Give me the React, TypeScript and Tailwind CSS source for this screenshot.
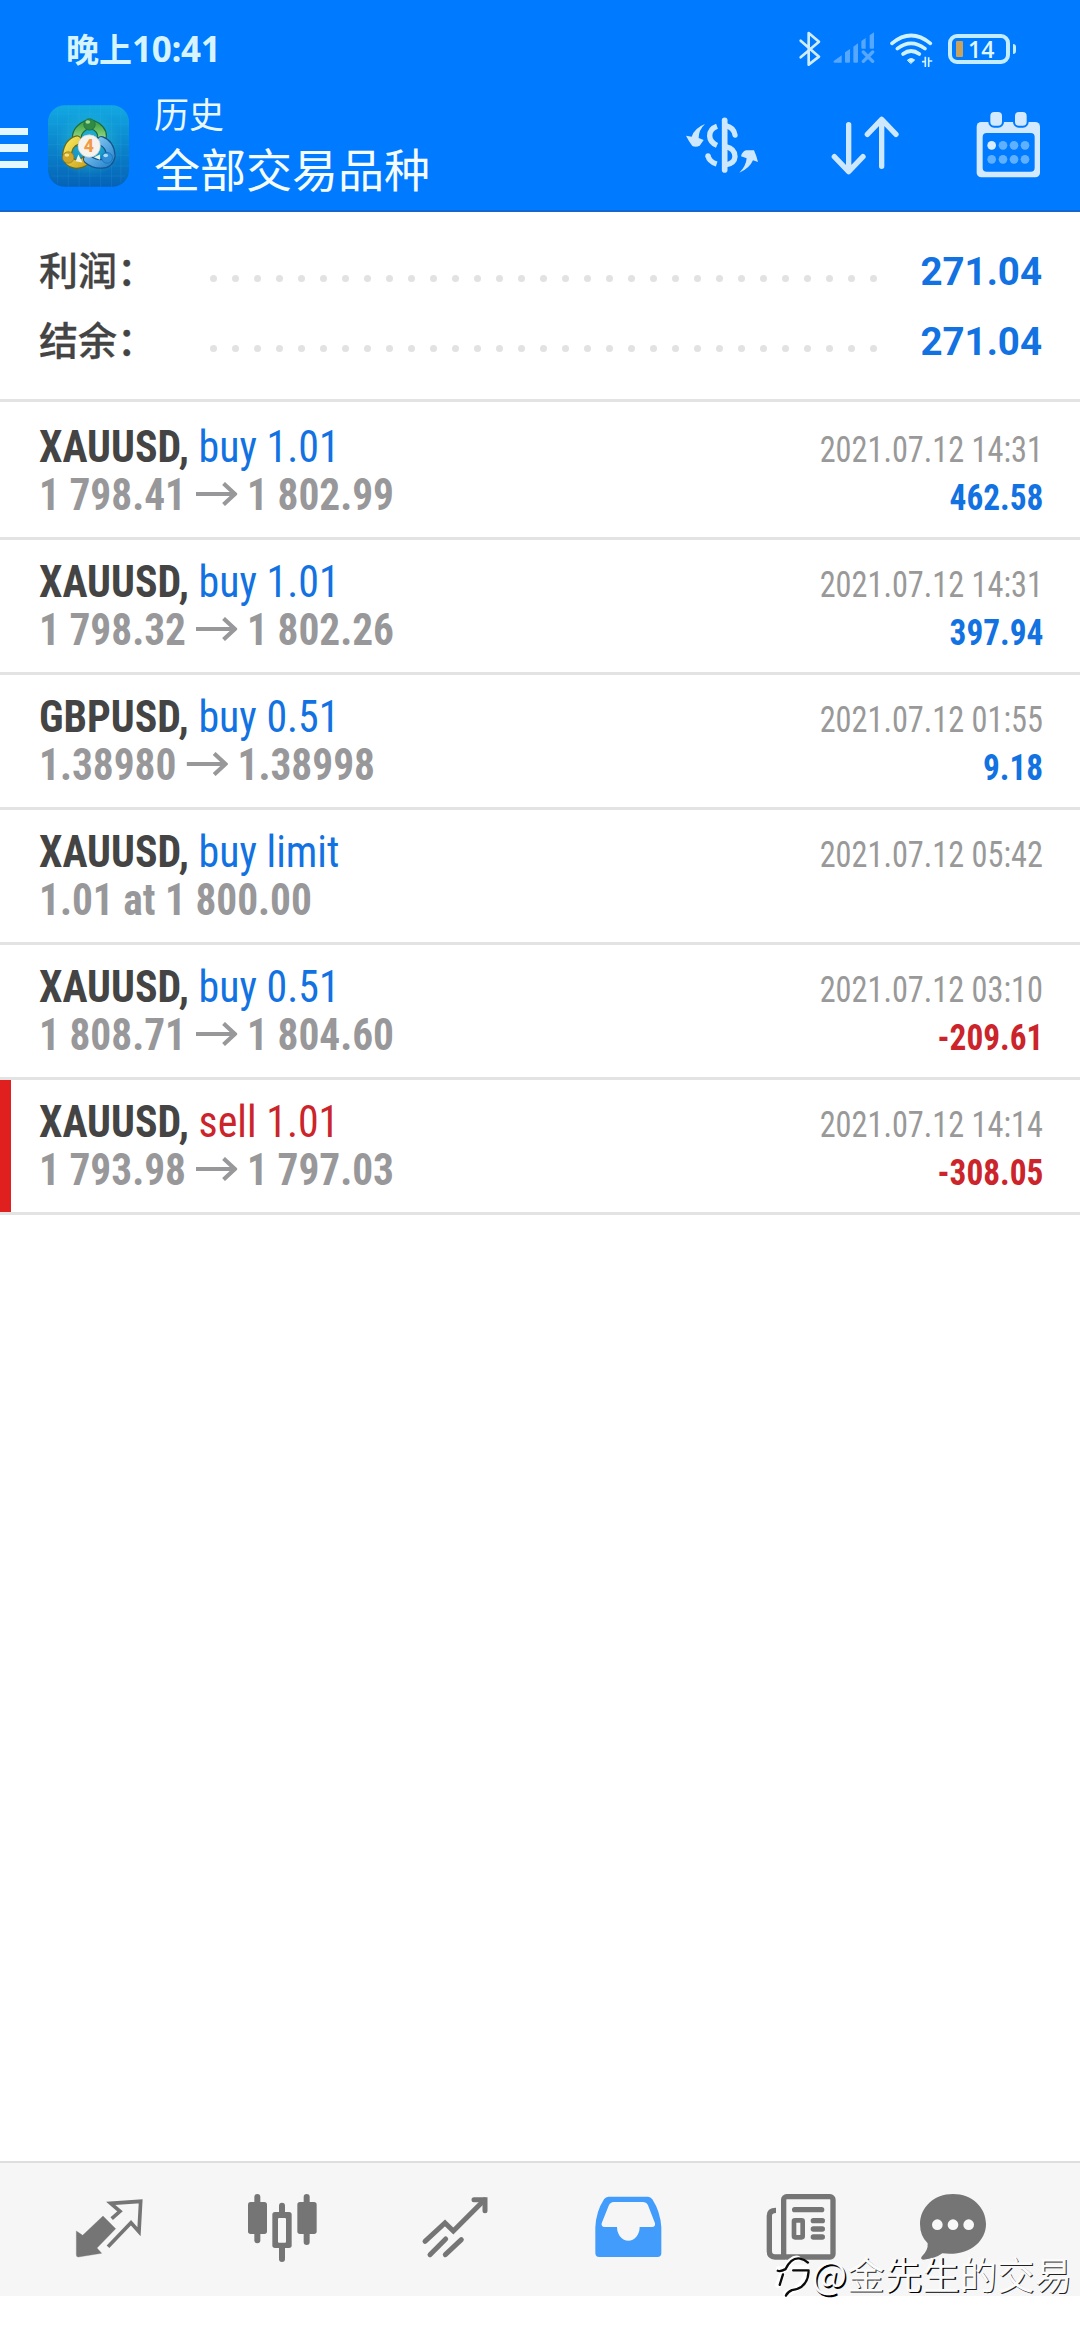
import type { ReactNode } from "react";

type Trade = {
  symbol: string;
  action: string;
  side: "buy" | "sell";
  from: string;
  to?: string;
  time: string;
  profit?: string;
  marked?: boolean;
};

const trades: Trade[] = [
  { symbol: "XAUUSD", action: "buy 1.01", side: "buy", from: "1 798.41", to: "1 802.99", time: "2021.07.12 14:31", profit: "462.58" },
  { symbol: "XAUUSD", action: "buy 1.01", side: "buy", from: "1 798.32", to: "1 802.26", time: "2021.07.12 14:31", profit: "397.94" },
  { symbol: "GBPUSD", action: "buy 0.51", side: "buy", from: "1.38980", to: "1.38998", time: "2021.07.12 01:55", profit: "9.18" },
  { symbol: "XAUUSD", action: "buy limit", side: "buy", from: "1.01 at 1 800.00", time: "2021.07.12 05:42" },
  { symbol: "XAUUSD", action: "buy 0.51", side: "buy", from: "1 808.71", to: "1 804.60", time: "2021.07.12 03:10", profit: "-209.61" },
  { symbol: "XAUUSD", action: "sell 1.01", side: "sell", from: "1 793.98", to: "1 797.03", time: "2021.07.12 14:14", profit: "-308.05", marked: true },
];

function BluetoothIcon() {
  return (
    <svg viewBox="414 94 72 108" className="h-9 w-6" fill="none" stroke="#d0ecff" strokeWidth="8" strokeLinecap="round" strokeLinejoin="round">
      <path d="M422 123L477 171L446 195V100L477 126L422 173" />
    </svg>
  );
}

function SignalIcon() {
  return (
    <svg viewBox="519 94 126 108" className="ml-[11px] h-9 w-[42px]" fill="#55a7ff">
      <path d="M521 184L545 167V189H524Q519 189 521 184Z" />
      <path d="M555 158L570 148V186Q570 189 567 189H558Q555 189 555 186Z" />
      <path d="M580 141L594 131V186Q594 189 591 189H583Q580 189 580 186Z" />
      <path d="M604 124L617 115V147H607Q604 147 604 144Z" />
      <path d="M629 107L642 98V144Q642 147 639 147H632Q629 147 629 144Z" />
      <path d="M610 157L638 185M638 157L610 185" stroke="#55a7ff" strokeWidth="10" strokeLinecap="round" />
    </svg>
  );
}

function WifiIcon() {
  return (
    <svg viewBox="687 94 138 108" className="ml-[14px] h-9 w-[46px]" fill="none" stroke="#d0f2ff" strokeWidth="11" strokeLinecap="round">
      <path d="M696 131Q753 84 811 131" />
      <path d="M712 147Q753 115 795 147" />
      <path d="M729 163Q753 145 778 163" />
      <path d="M743 181Q753 172 764 181L753 191Z" fill="#d0f2ff" strokeWidth="3" strokeLinejoin="round" />
      <path d="M788 186L796 186V171V200M806 200V173V184H815" strokeWidth="5" />
    </svg>
  );
}

function Battery() {
  return (
    <div className="ml-[13px] flex items-center gap-[3px]">
      <div className="flex h-[30px] w-[62px] items-center rounded-[9px] border-4 border-[#c3ecff] pl-[4px]">
        <div className="h-4 w-[7px] rounded-[1px] bg-[#c9a35c]" />
        <span className="ml-[5px] font-['Open_Sans'] text-[23px] leading-6 font-semibold text-[#e0f8ff]">14</span>
      </div>
      <div className="h-[10px] w-[3px] rounded-r bg-[#c3ecff]" />
    </div>
  );
}

function AppLogo() {
  return (
    <svg viewBox="24 30 240 242" className="mt-[2px] ml-5 h-[82px] w-[81px]">
      <defs>
        <linearGradient id="tile" x1="0" y1="0" x2="0" y2="1">
          <stop offset="0" stopColor="#12a9e2" />
          <stop offset="0.5" stopColor="#0b85cc" />
          <stop offset="1" stopColor="#0562b6" />
        </linearGradient>
        <radialGradient id="glow">
          <stop offset="0" stopColor="#2fd0c8" stopOpacity="0.65" />
          <stop offset="1" stopColor="#2fd0c8" stopOpacity="0" />
        </radialGradient>
        <linearGradient id="green" x1="0" y1="0" x2="0" y2="1">
          <stop offset="0" stopColor="#4aa84a" />
          <stop offset="1" stopColor="#a5e592" />
        </linearGradient>
        <linearGradient id="gold" x1="0" y1="0" x2="1" y2="1">
          <stop offset="0" stopColor="#f3e65a" />
          <stop offset="1" stopColor="#cfa722" />
        </linearGradient>
        <linearGradient id="azure" x1="0" y1="0" x2="1" y2="1">
          <stop offset="0" stopColor="#8fd0f5" />
          <stop offset="1" stopColor="#2a86cf" />
        </linearGradient>
      </defs>
      <rect x="24" y="30" width="240" height="242" rx="50" fill="url(#tile)" />
      <path d="M52 40V262M84 30V272M116 30V272M148 30V272M180 30V272M212 30V272M240 40V262M34 56H254M24 86H264M24 116H264M24 146H264M24 178H264M24 210H264M34 240H254" stroke="#55c6ff" strokeOpacity="0.18" strokeWidth="2" />
      <circle cx="146" cy="145" r="100" fill="url(#glow)" />
      <path d="M112 138Q103 112 128 94Q147 80 168 94Q190 110 182 134" fill="none" stroke="#1d6a3d" strokeWidth="29" strokeLinecap="round" />
      <path d="M112 138Q103 112 128 94Q147 80 168 94Q190 110 182 134" fill="none" stroke="url(#green)" strokeWidth="22" strokeLinecap="round" />
      <path d="M110 134Q84 142 80 178Q82 200 104 204Q122 206 136 194" fill="none" stroke="#6a6a1c" strokeWidth="29" strokeLinecap="round" />
      <path d="M110 134Q84 142 80 178Q82 200 104 204Q122 206 136 194" fill="none" stroke="url(#gold)" strokeWidth="22" strokeLinecap="round" />
      <path d="M182 136Q208 146 210 180Q206 203 182 204Q160 205 142 190" fill="none" stroke="#15548d" strokeWidth="29" strokeLinecap="round" />
      <path d="M182 136Q208 146 210 180Q206 203 182 204Q160 205 142 190" fill="none" stroke="url(#azure)" strokeWidth="22" strokeLinecap="round" />
      <path d="M106 196L114 176L126 200ZM178 192L160 184L178 176Z" fill="#eef3e0" />
      <ellipse cx="147" cy="87" rx="17" ry="17" fill="#2f8a45" stroke="#1b6a3c" strokeWidth="2" />
      <ellipse cx="142" cy="80" rx="7" ry="5" fill="#a3d98e" />
      <circle cx="84" cy="185" r="17" fill="#cfa52a" stroke="#8c7a1c" strokeWidth="2" />
      <ellipse cx="80" cy="178" rx="7" ry="5" fill="#f3e284" />
      <circle cx="199" cy="186" r="16" fill="#2f8fd6" stroke="#1a69ad" strokeWidth="2" />
      <ellipse cx="195" cy="179" rx="7" ry="5" fill="#a8daf7" />
      <circle cx="146" cy="151" r="33" fill="#f6f3ef" stroke="#c8cfd0" strokeWidth="2" />
      <text x="145" y="170" textAnchor="middle" fontFamily="Roboto, sans-serif" fontSize="52" fontWeight="800" fill="#f09a45">4</text>
    </svg>
  );
}

function CurrencyIcon() {
  return (
    <svg viewBox="75 342 222 180" className="h-[60px] w-[74px]" fill="none" stroke="#cde7fd" strokeWidth="16">
      <path d="M194 358V507" strokeLinecap="round" strokeWidth="17" />
      <path d="M197 374Q222 380 225 402" strokeLinecap="round" />
      <path d="M197 437Q225 443 225 467Q224 487 197 492" />
      <path d="M171 376Q149 384 149 405Q150 424 171 433" />
      <path d="M144 464Q147 482 170 489" strokeLinecap="butt" />
      <circle cx="144" cy="465" r="8" fill="#cde7fd" stroke="none" />
      <path d="M135 369Q116 387 116 411L131 417L119 434Q108 440 97 435Q86 420 78 404L95 407Q104 381 135 369Z" fill="#cde7fd" stroke="none" />
      <path d="M238 515Q258 496 260 472L243 466Q246 452 258 448L282 448Q290 466 294 483L279 478Q268 503 238 515Z" fill="#cde7fd" stroke="none" />
    </svg>
  );
}

function SortIcon() {
  return (
    <svg viewBox="510 345 210 180" className="ml-[71px] h-[60px] w-[70px]" fill="none" stroke="#cde7fd" strokeWidth="16" strokeLinecap="round" strokeLinejoin="round">
      <path d="M566 374V514M523 470L566 515L609 470" />
      <path d="M665 499V360M622 403L665 358L708 403" />
    </svg>
  );
}

function CalendarIcon() {
  return (
    <svg viewBox="945 333 198 204" className="ml-[75px] h-[68px] w-[66px]">
      <rect x="950" y="366" width="190" height="166" rx="14" fill="#d3eafe" />
      <rect x="968" y="399" width="156" height="116" rx="12" fill="#007aff" />
      <rect x="985" y="330" width="47" height="53" rx="17" fill="#007aff" />
      <rect x="1059" y="330" width="47" height="53" rx="17" fill="#007aff" />
      <rect x="991" y="336" width="35" height="41" rx="12" fill="#d3eafe" />
      <rect x="1065" y="336" width="35" height="41" rx="12" fill="#d3eafe" />
      <g fill="#5fb0ff">
        <circle cx="995" cy="436" r="13" fill="#d8eefe" />
        <circle cx="1029" cy="436" r="13" />
        <circle cx="1062" cy="436" r="13" />
        <circle cx="1095" cy="436" r="13" />
        <circle cx="995" cy="478" r="13" />
        <circle cx="1029" cy="478" r="13" />
        <circle cx="1062" cy="478" r="13" />
        <circle cx="1095" cy="478" r="13" />
      </g>
    </svg>
  );
}

function Header() {
  return (
    <header className="h-[212px] border-b-2 border-[#1467cf] bg-[#007aff]">
      <div className="flex h-[98px] items-center justify-between pr-[64px] pb-px pl-[66px]">
        <span className="font-['Noto_Sans_CJK_SC',sans-serif] text-[33px] leading-10 font-bold text-[#d5f4ff]">
          晚上<span className="font-['Open_Sans',sans-serif] text-[35px] font-bold tracking-[-0.3px]">10:41</span>
        </span>
        <div className="flex items-center">
          <BluetoothIcon />
          <SignalIcon />
          <WifiIcon />
          <Battery />
        </div>
      </div>
      <div className="flex h-[112px] items-center justify-between pr-[39px] pb-[18px]">
        <div className="flex items-center">
          <div className="mt-[6px] flex w-7 flex-col gap-[9px]">
            <div className="h-[7.5px] bg-[#e4f6fe]" />
            <div className="h-[7.5px] bg-[#e4f6fe]" />
            <div className="h-[7.5px] bg-[#e4f6fe]" />
          </div>
          <AppLogo />
          <div className="ml-[25px] flex flex-col gap-1 font-['Noto_Sans_CJK_SC',sans-serif] text-[#e9f7ff]">
            <span className="text-[35px] leading-10">历史</span>
            <span className="text-[46px] leading-[60px] text-[#f4fcff]">全部交易品种</span>
          </div>
        </div>
        <div className="flex items-center">
          <CurrencyIcon />
          <SortIcon />
          <CalendarIcon />
        </div>
      </div>
    </header>
  );
}

function SummaryRow({ label, value }: { label: string; value: string }) {
  return (
    <div className="flex h-[70px] items-center">
      <span className="w-[171px] pb-[7px] font-['Noto_Sans_CJK_SC',sans-serif] text-[39px] leading-[60px] font-medium text-[#444] [-webkit-text-stroke:0.3px_#444]">{label}</span>
      <div className="mt-[15px] flex w-[667px] justify-between">
        {Array.from({ length: 31 }, (_, i) => (
          <span key={i} className="size-[7px] rounded-full bg-[#e2e2e2]" />
        ))}
      </div>
      <span className="flex-1 text-right text-[38.5px] leading-[71px] font-bold text-[#1272e2]">{value}</span>
    </div>
  );
}

function PriceArrow() {
  return (
    <svg viewBox="0 0 42 24" preserveAspectRatio="none" className="mr-[10px] ml-[11px] inline-block h-6 w-[44px] align-[4px]" fill="none" stroke="#98989a" strokeWidth="4.2">
      <path d="M0 12H40M28 1.5L39.5 12L28 22.5" />
    </svg>
  );
}

function TradeRow({ trade }: { trade: Trade }) {
  const loss = trade.profit?.startsWith("-");
  return (
    <div className={`flex h-[135px] flex-col border-b-[3px] border-[#e3e3e3] pt-[18px] pr-[37px] pl-[39px] [font-stretch:75%] ${trade.marked ? "bg-[linear-gradient(to_right,#e01f1f_11px,transparent_11px)]" : ""}`}>
      <div className="flex h-12 items-baseline justify-between">
        <span className="origin-left scale-x-[.952] text-[44px] leading-[48px] whitespace-pre">
          <span className="font-bold text-[#444]">{trade.symbol}, </span>
          <span className={trade.side === "buy" ? "text-[#1272e2]" : "text-[#cb242b]"}>{trade.action}</span>
        </span>
        <span className="origin-right scale-x-[.897] text-[36px] leading-[48px] text-[#999]">{trade.time}</span>
      </div>
      <div className="flex h-12 items-baseline justify-between">
        <span className="origin-left scale-x-[.94] text-[44px] leading-[48px] font-bold whitespace-nowrap text-[#98989a]">
          {trade.from}
          {trade.to && <PriceArrow />}
          {trade.to}
        </span>
        {trade.profit && (
          <span className={`origin-right scale-x-[.925] text-[36px] leading-[48px] font-bold ${loss ? "text-[#cb242b]" : "text-[#1272e2]"}`}>{trade.profit}</span>
        )}
      </div>
    </div>
  );
}

function NavItem({ children }: { children: ReactNode }) {
  return <div className="flex w-[173px] justify-center pt-[29px] last:w-[132px]">{children}</div>;
}

function NavBar() {
  return (
    <nav className="flex h-[135px] border-t-2 border-[#dedede] bg-[#f6f6f6] pl-[22px]">
      <NavItem>
        <svg viewBox="97 126 216 216" className="size-[72px]" fill="#757575">
          <path d="M187 198L225 236L169 294L183 310L113 321Q107 321 107 315V243L126 256Z" stroke="#757575" strokeWidth="1" />
          <path d="M213 206L238 184L210 160L300 154L295 245L271 218L202 290" fill="none" stroke="#757575" strokeWidth="11" />
        </svg>
      </NavItem>
      <NavItem>
        <svg viewBox="615 126 216 216" className="size-[72px]" fill="#757575">
          <rect x="640" y="132" width="18" height="148" rx="9" />
          <rect x="621" y="156" width="57" height="96" rx="8" />
          <rect x="788" y="132" width="18" height="153" rx="9" />
          <rect x="769" y="156" width="58" height="96" rx="8" />
          <rect x="714" y="158" width="18" height="178" rx="9" />
          <rect x="694" y="186" width="58" height="108" rx="8" />
          <rect x="711" y="204" width="24" height="74" rx="3" fill="#f6f6f6" />
        </svg>
      </NavItem>
      <NavItem>
        <svg viewBox="1134 126 216 216" className="size-[72px]" fill="none" stroke="#757575" strokeWidth="15" strokeLinecap="round">
          <path d="M1152 274L1212 219L1237 243L1330 150" />
          <path d="M1299 149H1332V182" />
          <path d="M1167 314L1214 267M1213 314L1261 269" />
        </svg>
      </NavItem>
      <NavItem>
        <svg viewBox="94 126 216 216" className="size-[72px]">
          <path fillRule="evenodd" fill="#429cfb" d="M104 232Q106 185 130 148Q135 140 144 140H262Q270 140 275 148Q299 185 302 232V309Q302 321 290 321H116Q104 321 104 309ZM123 220L144 167Q149 156 159 156H246Q257 156 262 166L283 220Q285 231 274 231H237A34 41 0 0 1 169 231H132Q121 231 123 220Z" />
        </svg>
      </NavItem>
      <NavItem>
        <svg viewBox="615 126 216 216" className="size-[72px]" fill="none" stroke="#757575" strokeWidth="16">
          <rect x="671" y="140" width="148" height="181" rx="9" />
          <path d="M648 181Q628 181 628 197V304Q628 321 645 321H676" />
          <path d="M704 179H785M760 212H787M760 237H787M760 261H787" strokeLinecap="round" />
          <rect x="702" y="211" width="26" height="51" rx="3" strokeWidth="14" />
        </svg>
      </NavItem>
      <NavItem>
        <svg viewBox="1071 126 216 216" className="size-[72px]" fill="#757575">
          <path d="M1179 132C1236 132 1278 172 1278 222C1278 276 1225 320 1147 310Q1126 326 1090 329Q1079 328 1086 319Q1105 300 1103 280Q1080 258 1080 222C1080 172 1122 132 1179 132Z" />
          <g fill="#f8f8f8">
            <circle cx="1132" cy="224" r="16" />
            <circle cx="1179" cy="224" r="16" />
            <circle cx="1226" cy="224" r="16" />
          </g>
        </svg>
      </NavItem>
    </nav>
  );
}

function Watermark() {
  return (
    <div className="absolute right-[8px] bottom-[40px] flex items-center">
      <svg viewBox="636 330 110 140" className="mt-[8px] h-[46px] w-[37px]" fill="none" strokeLinecap="round">
        <path d="M646 376H668Q684 340 704 344M690 372H730Q734 430 668 450M656 392L644 424" stroke="#fff" strokeWidth="18" />
        <path d="M643 381Q652 384 667 376Q684 340 711 344Q724 346 735 356M690 380H737M737 384Q734 434 686 440Q672 446 668 457M659 392L649 424" stroke="#0a0a0a" strokeWidth="7" />
      </svg>
      <span className="font-['Noto_Sans_CJK_SC',sans-serif] text-[37.5px] leading-[44px] text-[#fbfbfb] [text-shadow:1px_1px_0_#222]">
        <span className="[text-shadow:1.5px_1.5px_0_#000]">@</span>金<span className="[text-shadow:1.5px_1px_0_#000]">先生</span>的交易
      </span>
    </div>
  );
}

export default function App() {
  return (
    <div className="relative flex h-[2340px] w-[1080px] flex-col overflow-hidden bg-white font-['Roboto',sans-serif]">
      <Header />
      <section className="h-[190px] border-b-[3px] border-[#e3e3e3] pt-6 pr-[38px] pl-[39px]">
        <SummaryRow label="利润：" value="271.04" />
        <SummaryRow label="结余：" value="271.04" />
      </section>
      <main className="flex-1 pt-[3px]">
        {trades.map((trade, i) => (
          <TradeRow key={i} trade={trade} />
        ))}
      </main>
      <NavBar />
      <div className="h-11" />
      <Watermark />
    </div>
  );
}
